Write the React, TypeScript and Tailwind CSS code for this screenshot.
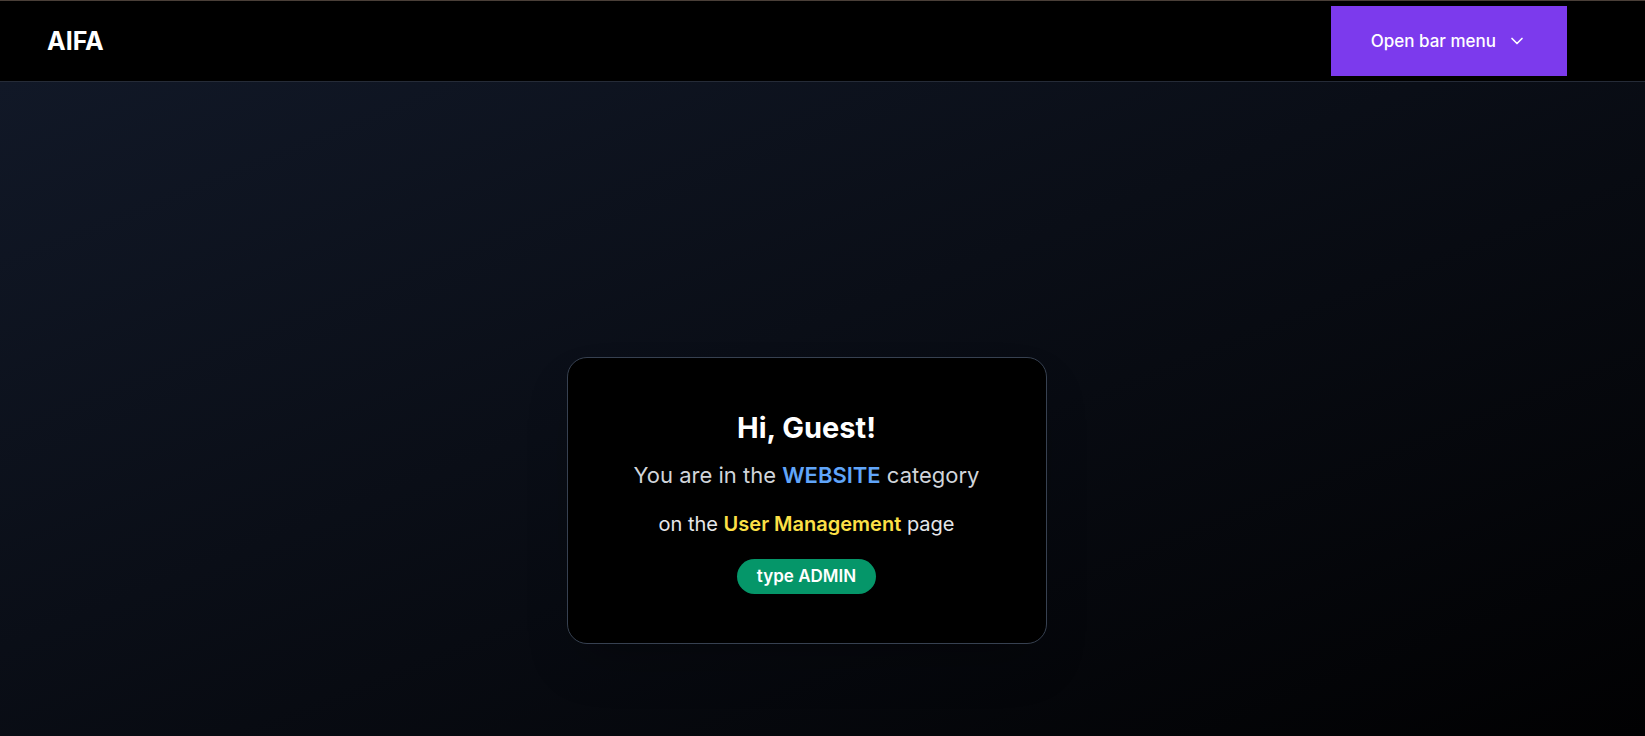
import { ChevronDown } from "lucide-react";

export default function App() {
  return (
    <div className="flex min-h-screen flex-col bg-black font-['Inter',sans-serif] text-white">
      <header className="flex h-[82px] items-center justify-between border-t border-b border-t-[#4a3f38] border-b-[#252b37] bg-black pr-[78px] pl-[47px]">
        <a href="#" className="pt-0.5 text-[25px] font-bold">
          AIFA
        </a>
        <button
          type="button"
          className="flex h-[70px] items-center gap-[11px] bg-[#7c3aed] px-10 text-[17px] font-medium"
        >
          <span className="pt-0.5">Open bar menu</span>
          <ChevronDown className="size-5" strokeWidth={2} aria-hidden="true" />
        </button>
      </header>
      <main className="flex grow flex-col items-center justify-end bg-linear-to-br/srgb from-[#111827] to-[#010102] pr-8 pb-[92px]">
        <section className="flex w-full max-w-[480px] flex-col items-center rounded-[20px] border border-[#374151] bg-black py-[49px] text-center shadow-2xl">
          <h1 className="text-[29px] leading-[42px] font-bold">Hi, Guest!</h1>
          <p className="mt-2 text-[22px] leading-9 text-[#d1d5db]">
            You are in the <span className="font-semibold text-[#60a5fa]">WEBSITE</span> category
          </p>
          <p className="mt-4 text-xl leading-[30px] text-[#e5e7eb]">
            on the <span className="font-semibold text-[#fde047]">User Management</span> page
          </p>
          <span className="mt-5 rounded-full bg-[#059669] px-5 py-1 text-[17px] leading-[27px] font-semibold">
            type ADMIN
          </span>
        </section>
      </main>
    </div>
  );
}
